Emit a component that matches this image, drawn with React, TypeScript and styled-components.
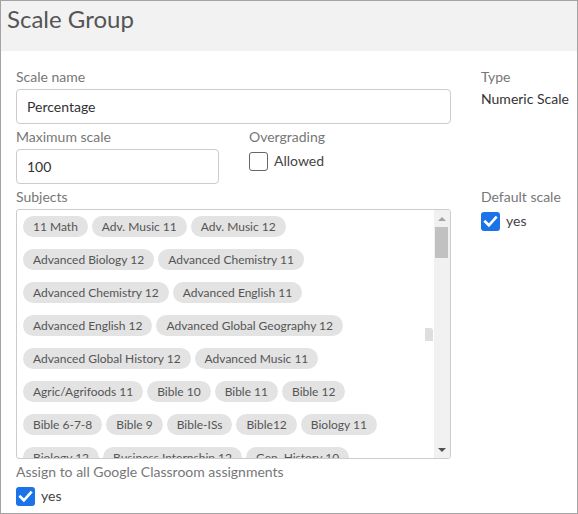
import React from "react"
import styled, { createGlobalStyle } from "styled-components"

const subjectRows = [
  ["11 Math", "Adv. Music 11", "Adv. Music 12"],
  ["Advanced Biology 12", "Advanced Chemistry 11"],
  ["Advanced Chemistry 12", "Advanced English 11"],
  ["Advanced English 12", "Advanced Global Geography 12"],
  ["Advanced Global History 12", "Advanced Music 11"],
  ["Agric/Agrifoods 11", "Bible 10", "Bible 11", "Bible 12"],
  ["Bible 6-7-8", "Bible 9", "Bible-ISs", "Bible12", "Biology 11"],
  ["Biology 12", "Business Internship 12", "Gen. History 10"],
  ["Gen. History 11", "Gen. History 12"],
]

function Checkbox({ checked }: { checked?: boolean }) {
  return (
    <Box checked={checked}>
      {checked && (
        <svg width="19" height="19" viewBox="0 0 20 20">
          <path
            d="M4.5 10.2 L8.3 14 L15.6 5.8"
            fill="none"
            stroke="#fff"
            strokeWidth="2.8"
            strokeLinecap="square"
          />
        </svg>
      )}
    </Box>
  )
}

export default function App() {
  return (
    <>
      <GlobalStyle />
      <Frame>
        <Header>Scale Group</Header>
        <Form>
          <Field>
            <Label>Scale name</Label>
            <Input defaultValue="Percentage" />
          </Field>
          <Field>
            <Label>Type</Label>
            <Value>Numeric Scale</Value>
          </Field>

          <SplitRow>
            <Field>
              <Label>Maximum scale</Label>
              <Input defaultValue="100" />
            </Field>
            <Field>
              <Label>Overgrading</Label>
              <CheckRow>
                <Checkbox />
                <CheckText>Allowed</CheckText>
              </CheckRow>
            </Field>
          </SplitRow>
          <div />

          <Field>
            <Label>Subjects</Label>
            <ListBox>
              <ChipArea>
                {subjectRows.map((row, i) => (
                  <ChipRow key={i}>
                    {row.map((s) => (
                      <Chip key={s}>{s}</Chip>
                    ))}
                  </ChipRow>
                ))}
                <ChipSliver />
              </ChipArea>
              <ScrollTrack>
                <ArrowButton>
                  <Arrow up />
                </ArrowButton>
                <Thumb />
                <TrackSpace />
                <ArrowButton>
                  <Arrow />
                </ArrowButton>
              </ScrollTrack>
            </ListBox>
          </Field>
          <Field>
            <Label>Default scale</Label>
            <CheckRow>
              <Checkbox checked />
              <CheckText>yes</CheckText>
            </CheckRow>
          </Field>

          <WideField>
            <Label>Assign to all Google Classroom assignments</Label>
            <CheckRow>
              <Checkbox checked />
              <CheckText>yes</CheckText>
            </CheckRow>
          </WideField>
        </Form>
      </Frame>
    </>
  )
}

const GlobalStyle = createGlobalStyle`
  body {
    margin: 0;
    font-family: Lato, "Open Sans", sans-serif;
    background: #fff;
  }
`

const Frame = styled.div`
  width: 578px;
  height: 514px;
  box-sizing: border-box;
  border: 1px solid #a3a3a3;
  background: #fff;
  overflow: hidden;
`

const Header = styled.div`
  height: 50px;
  box-sizing: border-box;
  padding: 4px 6px 0;
  background: #f2f2f2;
  color: #555;
  font-size: 24px;
  line-height: 28.8px;
`

const Form = styled.div`
  display: grid;
  grid-template-columns: 435px 1fr;
  column-gap: 30px;
  padding: 16px 0 0 15px;
`

const Field = styled.div`
  display: flex;
  flex-direction: column;
  margin-bottom: 3px;
`

const WideField = styled(Field)`
  grid-column: 1 / span 2;
`

const SplitRow = styled.div`
  display: grid;
  grid-template-columns: 203px 1fr;
  column-gap: 30px;
`

const Label = styled.div`
  font-size: 14px;
  line-height: 20px;
  color: #777;
  margin-bottom: 2px;
  white-space: nowrap;
`

const Value = styled.div`
  font-size: 14px;
  line-height: 20px;
  color: #333;
  white-space: nowrap;
`

const Input = styled.input`
  height: 35px;
  box-sizing: border-box;
  border: 1px solid #ccc;
  border-radius: 4px;
  padding: 0 10px;
  font-family: Lato, sans-serif;
  font-size: 14px;
  color: #333;
  outline: none;
`

const CheckRow = styled.div`
  display: flex;
  align-items: center;
  gap: 6px;
  margin-top: 3px;
  height: 19px;
`

const Box = styled.div<{ checked?: boolean }>`
  width: 19px;
  height: 19px;
  box-sizing: border-box;
  border-radius: 3px;
  background: ${(p) => (p.checked ? "#1a73e8" : "#fff")};
  border: ${(p) => (p.checked ? "none" : "1px solid #666")};
  display: flex;
  flex-shrink: 0;
`

const CheckText = styled.span`
  font-size: 14px;
  line-height: 20px;
  margin-top: -2px;
  color: #444;
`

const ListBox = styled.div`
  height: 250px;
  box-sizing: border-box;
  border: 1px solid #ccc;
  border-radius: 3px;
  display: flex;
  overflow: hidden;
`

const ChipArea = styled.div`
  position: relative;
  flex: 1;
  display: flex;
  flex-direction: column;
  gap: 12px;
  padding: 6px 0 0 6px;
  overflow: hidden;
`

const ChipRow = styled.div`
  display: flex;
  gap: 4px;
  flex-shrink: 0;
`

const Chip = styled.span`
  height: 21px;
  line-height: 21px;
  padding: 0 10px;
  border-radius: 11px;
  background: #e3e3e3;
  color: #555;
  font-size: 12px;
  white-space: nowrap;
`

const ChipSliver = styled.span`
  position: absolute;
  right: 1px;
  top: 118px;
  width: 8px;
  height: 13px;
  background: #dedede;
  border-top-right-radius: 3px;
`

const ScrollTrack = styled.div`
  width: 16px;
  background: #f1f1f1;
  display: flex;
  flex-direction: column;
`

const ArrowButton = styled.div`
  height: 17px;
  display: flex;
  align-items: center;
  justify-content: center;
`

const Arrow = styled.span<{ up?: boolean }>`
  width: 0;
  height: 0;
  border-left: 4px solid transparent;
  border-right: 4px solid transparent;
  ${(p) =>
    p.up
      ? "border-bottom: 4px solid #a3a3a3;"
      : "border-top: 4px solid #505050;"}
`

const Thumb = styled.div`
  height: 31px;
  margin: 0 2px 0 1px;
  background: #c1c1c1;
`

const TrackSpace = styled.div`
  flex: 1;
`
